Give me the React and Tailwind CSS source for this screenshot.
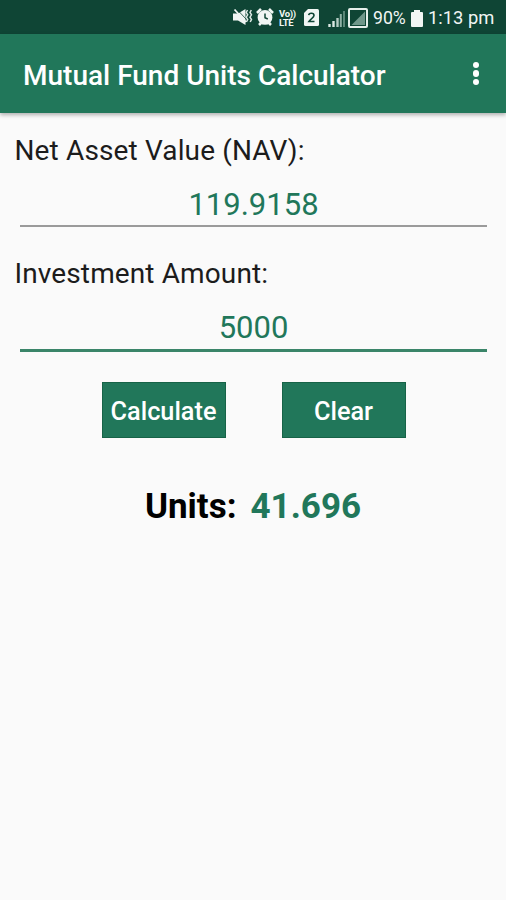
import { useState } from "react";

function VibrateIcon() {
  return (
    <svg className="w-5 h-[18px]" viewBox="0 0 20 18" fill="#f1f6f4">
      <path d="M0 5.500h5L12.500 1v16L5 12.500H0z" />
      <path d="M14.500 2l-1.300 2.500 1.500 2.300-1.500 2.400 1.500 2.300-1.300 2.500M18.300 2L17 4.500l1.500 2.300L17 9.200l1.500 2.300-1.300 2.500" fill="none" stroke="#dce8e3" strokeWidth="1.500" />
      <path d="M5 2.500l8 8.500" stroke="#0f4535" strokeWidth="0.800" />
      <path d="M1.500 1.500L13 14" stroke="#f1f6f4" strokeWidth="1.800" />
    </svg>
  );
}

function AlarmIcon() {
  return (
    <svg className="w-[18px] h-[18px]" viewBox="0 0 18 18" fill="#f1f6f4">
      <circle cx="9" cy="9.4" r="7.4" />
      <path d="M1 5l4-4M17 5l-4-4M3 17l2.5-2.5M15 17l-2.5-2.5" stroke="#f1f6f4" strokeWidth="2.6" />
      <path d="M9 5.5v4.3l2.8 1.2" fill="none" stroke="#0f4535" strokeWidth="1.5" />
    </svg>
  );
}

function SimIcon() {
  return (
    <svg className="w-[15px] h-[17px]" viewBox="0 0 15 17">
      <path d="M4 0h9.500A1.500 1.500 0 0 1 15 1.500v14a1.500 1.500 0 0 1-1.500 1.500h-12A1.500 1.500 0 0 1 0 15.500V4z" fill="#f1f6f4" />
      <path d="M4.700 6.200c.3-2.700 5.300-2.600 5.300.2 0 1.800-3.200 3.600-5 6.100h5.500" fill="none" stroke="#0f4535" strokeWidth="1.6" />
    </svg>
  );
}

function SignalIcon() {
  return (
    <svg className="w-[17px] h-[17px]" viewBox="0 0 17 17">
      <path d="M1.500 17v-3M5.500 17v-6" stroke="#dce8e3" strokeWidth="2.400" />
      <path d="M9.500 17V8" stroke="#b7cdc5" strokeWidth="2.400" />
      <path d="M12.800 17V4" stroke="#8fb0a5" strokeWidth="2" />
      <path d="M16 17V1" stroke="#5a8577" strokeWidth="2" />
    </svg>
  );
}

function SignalBoxIcon() {
  return (
    <svg className="w-5 h-5" viewBox="0 0 20 20">
      <rect x="1" y="1" width="18" height="18" rx="1" fill="none" stroke="#e6efeb" strokeWidth="2" />
      <path d="M3.500 17L17 3.500V17z" fill="#6f978a" />
    </svg>
  );
}

function BatteryIcon() {
  return (
    <svg className="w-3 h-[17px]" viewBox="0 0 12 17" fill="#f1f6f4">
      <path d="M3 0h6v2h2a1 1 0 0 1 1 1v13a1 1 0 0 1-1 1H1a1 1 0 0 1-1-1V3a1 1 0 0 1 1-1h2z" />
    </svg>
  );
}

function StatusBar() {
  return (
    <div className="flex items-center h-[34px] pl-[233px] bg-[#0f4535] text-[#f1f6f4]">
      <VibrateIcon />
      <div className="ml-[3px]">
        <AlarmIcon />
      </div>
      <div className="flex flex-col ml-[5px] mt-[2px] w-[17px] text-[9.500px] leading-[9px] font-bold whitespace-pre">
        <span className="tracking-[-0.3px]">{"Vo))\nLTE"}</span>
      </div>
      <div className="ml-[8px] mt-px">
        <SimIcon />
      </div>
      <div className="ml-[9px] mt-[2px]">
        <SignalIcon />
      </div>
      <div className="ml-[3px] mt-px">
        <SignalBoxIcon />
      </div>
      <span className="ml-[5px] mt-[3px] w-[34px] origin-left scale-x-[0.93] whitespace-nowrap text-[19px]">
        90%
      </span>
      <div className="ml-[4px] mt-[2px]">
        <BatteryIcon />
      </div>
      <span className="ml-[5px] mt-[3px] origin-left scale-x-[0.965] whitespace-nowrap text-[19px]">
        1:13 pm
      </span>
    </div>
  );
}

function AppBar() {
  return (
    <header className="relative flex items-center justify-between h-[79px] pl-[23px] pr-[27px] bg-[#21775a] text-white shadow-[0_2px_4px_rgba(0,0,0,0.3)]">
      <h1 className="pt-[4px] text-[28px] leading-8 font-medium whitespace-nowrap">Mutual Fund Units Calculator</h1>
      <button className="flex flex-col gap-[2px]" aria-label="More options">
        <span className="size-[6.500px] rounded-full bg-white" />
        <span className="size-[6.500px] rounded-full bg-white" />
        <span className="size-[6.500px] rounded-full bg-white" />
      </button>
    </header>
  );
}

export default function App() {
  const [nav, setNav] = useState("119.9158");
  const [amount, setAmount] = useState("5000");
  const [units, setUnits] = useState("41.696");

  const calculate = () => {
    const result = Number(amount) / Number(nav);
    setUnits(Number.isFinite(result) ? result.toFixed(3) : "");
  };

  const clear = () => {
    setNav("");
    setAmount("");
    setUnits("");
  };

  return (
    <div className="h-[900px] overflow-hidden bg-[#fafafa] font-['Roboto',sans-serif]">
      <StatusBar />
      <AppBar />

      <main className="pt-[22px]">
        {/* NAV */}
        <label htmlFor="nav" className="block pl-[14.500px] text-[28px] leading-8 tracking-[0.14px] text-[#1c1c1c]">
          Net Asset Value (NAV):
        </label>
        <input
          id="nav"
          value={nav}
          onChange={(e) => setNav(e.target.value)}
          className="block mt-[14px] ml-[20px] w-[467px] h-[46px] border-b-2 border-[#9a9a9a] pt-[4px] text-center text-[31px] text-[#21775a] outline-none"
        />

        {/* Amount */}
        <label htmlFor="amount" className="block mt-[31px] pl-[14.500px] text-[28px] leading-8 tracking-[0.12px] text-[#1c1c1c]">
          Investment Amount:
        </label>
        <input
          id="amount"
          value={amount}
          onChange={(e) => setAmount(e.target.value)}
          className="block mt-[14px] ml-[20px] w-[467px] h-[48px] border-b-3 border-[#3a8569] pt-[2px] text-center text-[31px] text-[#21775a] outline-none"
        />

        <div className="flex justify-center gap-[56px] mt-[30px] pl-[1px]">
          <button onClick={calculate} className="w-[124px] h-[56px] border border-[#176347] bg-[#21775a] pt-[4px] text-[25.300px] font-medium text-white">
            Calculate
          </button>
          <button onClick={clear} className="w-[124px] h-[56px] border border-[#176347] bg-[#21775a] pt-[4px] text-[25.300px] font-medium text-white">
            Clear
          </button>
        </div>

        <div className="flex justify-center gap-[14px] mt-[47px] text-[35px] leading-[44px] font-bold">
          <span className="text-black">Units:</span>
          <span className="text-[#21775a]">{units}</span>
        </div>
      </main>
    </div>
  );
}
